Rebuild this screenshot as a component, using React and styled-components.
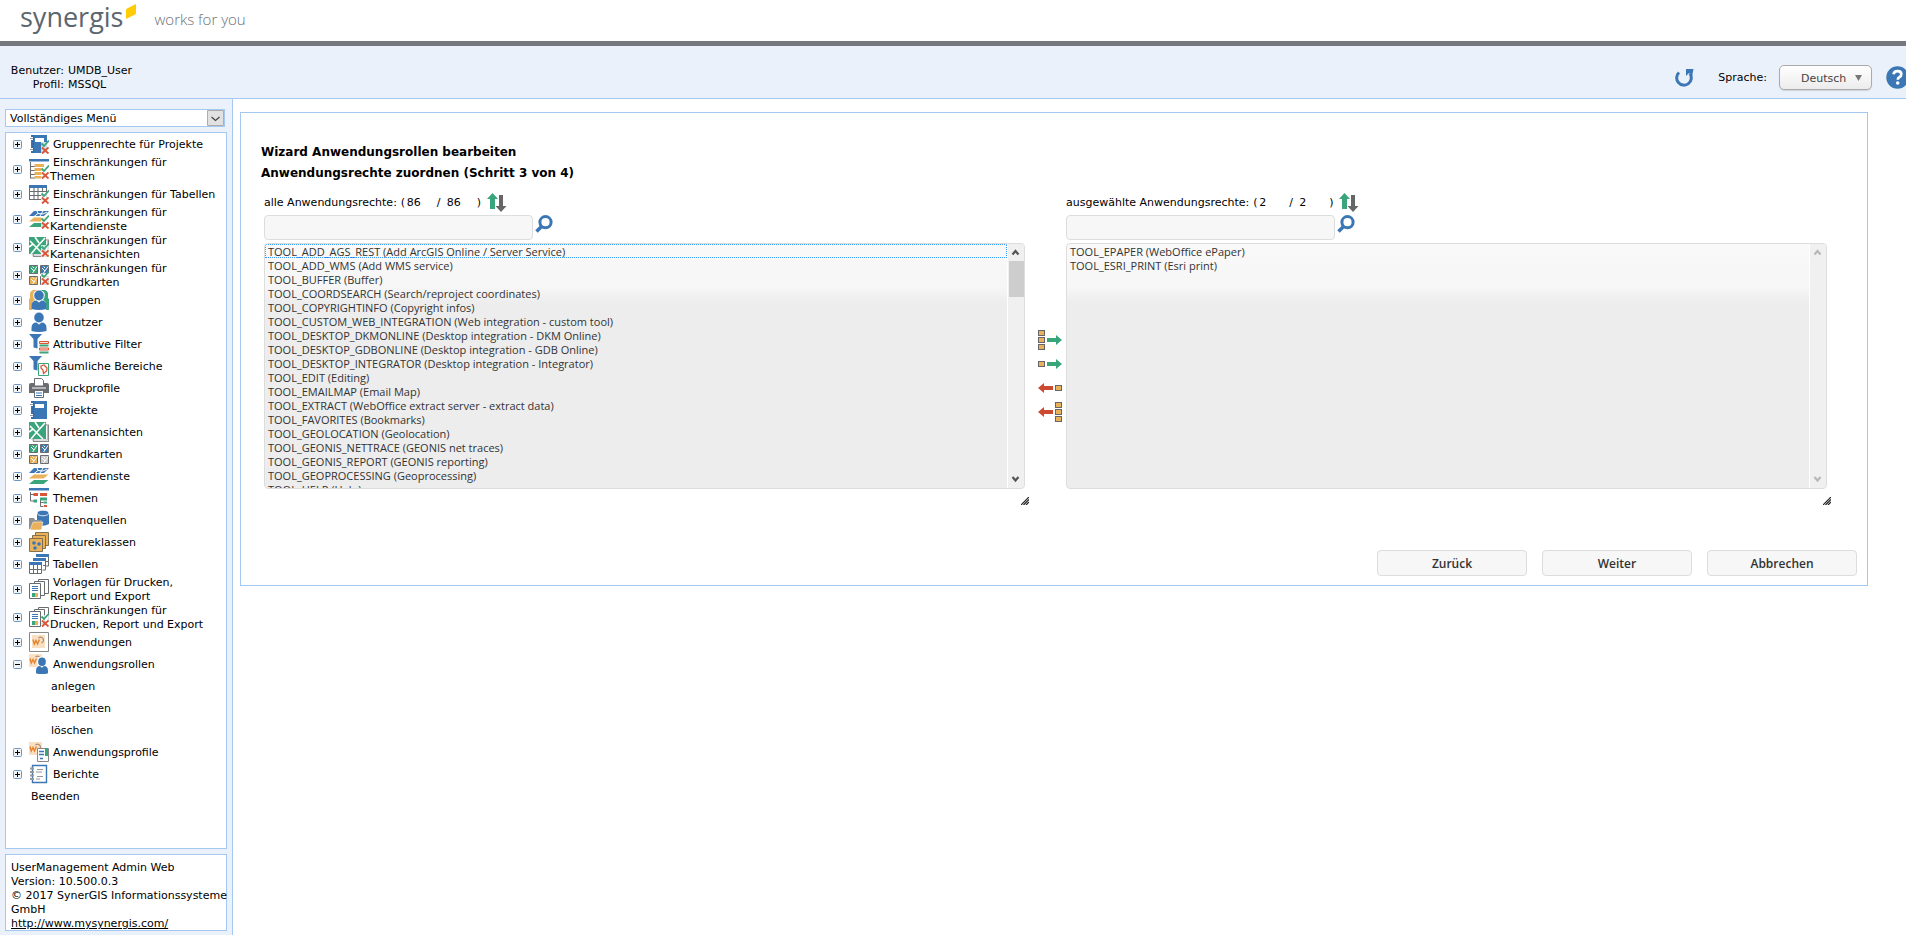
import { useState } from 'react'
import styled, { createGlobalStyle, css } from 'styled-components'

const BLUE = '#3c77b5'
const GREEN = '#3aa57a'
const ORANGE = '#e9b25a'
const RED = '#dc5538'
const GREY = '#6a6d6f'
const LINE = '#a4c8f0'
const PALE = '#eaf1fa'

const GlobalStyle = createGlobalStyle`
  * {
    box-sizing: border-box;
  }

  body {
    margin: 0;
    overflow-x: hidden;
    background: white;
    color: black;
    font-family: Verdana, 'DejaVu Sans', sans-serif;
    font-size: 11px;
    line-height: 14px;
  }
`

const Page = styled.div`
  display: flex;
  flex-direction: column;
  min-height: 100vh;
`

const Header = styled.header`
  display: flex;
  align-items: flex-start;
  height: 46px;
  padding-left: 20px;
  border-bottom: 5px solid #75787c;
  font-family: 'Open Sans', sans-serif;
`

const Brand = styled.div`
  font-size: 27px;
  line-height: 34px;
  color: #5c666e;
`

const BrandMark = styled.svg`
  width: 12px;
  height: 16px;
  margin: 4px 18px 0 1px;
`

const Claim = styled.div`
  font-size: 15px;
  font-weight: 300;
  line-height: 38px;
  color: #6c7074;
`

const TopBar = styled.div`
  display: flex;
  justify-content: space-between;
  height: 53px;
  background: ${PALE};
  border-bottom: 1px solid ${LINE};
`

const Session = styled.dl`
  display: grid;
  grid-template-columns: 54px auto;
  column-gap: 4px;
  align-content: start;
  margin: 0;
  padding: 18px 0 0 10px;

  dt {
    text-align: right;
  }

  dd {
    margin: 0;
  }
`

const Tools = styled.div`
  display: flex;
  align-items: center;
  height: 63px;
  margin-right: -3px;
`

const IconButton = styled.button`
  display: block;
  padding: 0;
  border: 0;
  background: none;
  line-height: 0;
  cursor: pointer;
`

const LanguageLabel = styled.label`
  margin: 0 12px 0 24px;
`

const SelectBox = styled.div`
  position: relative;

  svg {
    position: absolute;
    pointer-events: none;
  }
`

const LanguageBox = styled(SelectBox)`
  width: 93px;
  margin-right: 14px;

  svg {
    top: 10px;
    right: 10px;
  }
`

const LanguageSelect = styled.select`
  appearance: none;
  display: block;
  width: 100%;
  height: 25px;
  padding: 2px 0 0 21px;
  border: 1px solid #aaa;
  border-radius: 5px;
  background: linear-gradient(#fff, #ececec);
  box-shadow: 0 1px 1px rgba(0, 0, 0, 0.12);
  color: #444;
  font: inherit;
`

const Body = styled.div`
  display: flex;
  flex: 1;
`

const Sidebar = styled.aside`
  display: flex;
  flex-direction: column;
  flex: none;
  width: 233px;
  padding: 10px 5px 4px;
  background: ${PALE};
  border-right: 1px solid ${LINE};
`

const MenuBox = styled(SelectBox)`
  width: 220px;
  margin-bottom: 5px;

  svg {
    top: 1px;
    right: 1px;
  }
`

const MenuSelect = styled.select`
  appearance: none;
  display: block;
  width: 100%;
  height: 18px;
  padding: 2px 4px 0;
  border: 1px solid ${LINE};
  border-radius: 0;
  background: white;
  color: black;
  font: inherit;
`

const boxed = css`
  width: 222px;
  background: white;
  border: 1px solid ${LINE};
`

const Menu = styled.nav`
  ${boxed}
  flex: 1;
  margin-bottom: 5px;
`

const MenuList = styled.ul`
  margin: 0;
  padding: 0;
  list-style: none;
`

const MenuRow = styled.li`
  display: flex;
  align-items: center;
  height: ${({ $tall }) => ($tall ? '28px' : '22px')};
  padding-left: ${({ $indent = 7 }) => $indent}px;
`

const MenuLink = styled.a`
  display: flex;
  align-items: center;
  color: black;
  text-decoration: none;
`

const MenuText = styled.span`
  padding: 2px 0 0 1px;
  text-indent: 3px;
  white-space: pre;
`

const Toggle = styled(IconButton)`
  margin-right: 7px;
`

const Info = styled.footer`
  ${boxed}
  padding: 6px 5px 0;
  height: 77px;
  white-space: pre;

  a {
    color: black;
  }
`

const Main = styled.main`
  flex: 1;
  min-width: 0;
  padding: 13px 38px 13px 7px;
`

const Wizard = styled.form`
  padding: 29px 10px 9px 20px;
  border: 1px solid ${LINE};
`

const Title = styled.h1`
  margin: 0;
  font-size: 12px;
  line-height: 21px;
`

const Transfer = styled.div`
  display: flex;
  padding: 9px 30px 0 3px;
`

const Column = styled.section`
  flex: 1;
  min-width: 0;
`

const ColumnHead = styled.div`
  display: flex;
  align-items: center;
  height: 20px;
`

const Count = styled.span`
  width: 30px;
`

const Paren = styled.span`
  width: 10px;
  padding-left: ${({ $first }) => ($first ? '4px' : '0')};
`

const SearchRow = styled.div`
  display: flex;
  align-items: flex-start;
  gap: 2px;
  margin: 2px 0 3px;
`

const SearchInput = styled.input`
  width: 269px;
  height: 25px;
  border: 1px solid #ddd;
  border-radius: 4px;
  background: #f7f7f7;
  font: inherit;
`

const ListFrame = styled.div`
  display: flex;
  height: 246px;
  border: 1px solid #ddd;
  border-radius: 4px;
  overflow: hidden;
  background: linear-gradient(#f9f9f9, #f6f6f6 18%, #ededed 24%);
`

const ListSelect = styled.select`
  flex: 1;
  min-width: 0;
  height: 100%;
  padding: 0;
  border: 0;
  outline: 0;
  background: none;
  color: #333;
  font-family: 'Open Sans', sans-serif;
  font-size: 11px;
  scrollbar-width: none;

  option {
    height: 14px;
    min-height: 14px;
    padding: 0 3px;
  }

  option[data-current='true'] {
    outline: 1px dotted #3399ff;
    outline-offset: -1px;
  }
`

const ScrollTrack = styled.div`
  display: flex;
  flex-direction: column;
  align-items: center;
  justify-content: space-between;
  width: 17px;
  border-left: 1px solid white;
  background: #f0f0f0;
`

const ScrollThumb = styled.div`
  width: 15px;
  height: 36px;
  margin-bottom: auto;
  background: #cdcdcd;
`

const Grip = styled.div`
  display: flex;
  justify-content: flex-end;
  margin: 8px -4px 0 0;
`

const MoveButtons = styled.div`
  display: flex;
  flex-direction: column;
  align-items: flex-end;
  width: 41px;
  padding: 135px 4px 0 0;

  button {
    height: 24px;
  }
`

const Actions = styled.div`
  display: flex;
  justify-content: flex-end;
  gap: 15px;
  margin-top: 45px;
`

const ActionButton = styled.button`
  width: 150px;
  height: 26px;
  border: 1px solid #ddd;
  border-radius: 4px;
  background: #f7f7f7;
  color: #333;
  font-family: 'Open Sans', sans-serif;
  font-size: 12px;
  font-weight: 600;
`

/* ---------- icons ---------- */

const Icon = ({ children }) => (
  <svg width="20" height="20" viewBox="0 0 20 20" fill="none" aria-hidden="true">
    {children}
  </svg>
)

const CheckCross = () => (
  <g fill="none">
    <path d="M12 8h8v12h-8z" fill="#fff" fillOpacity=".75" />
    <path d="M12.500 9.500l2.500 2.500 5-5.500" stroke={GREEN} strokeWidth="1.800" />
    <path d="M13 13.500l6.500 6M19.500 13.500l-6.500 6" stroke={RED} strokeWidth="1.900" />
  </g>
)

const Book = () => (
  <g>
    <path d="M2 1h16v18H2z" fill={BLUE} />
    <path d="M6 4h9v4H6z" fill="#fff" />
    <path d="M4 1v18" stroke="#2f639b" strokeWidth="1" />
    <path d="M1 4.500h3M1 15.500h3" stroke="#fff" strokeWidth="3" />
    <path d="M1 4.500h3M1 15.500h3" stroke="#999" strokeWidth="1.200" />
  </g>
)

const Grid = () => (
  <g>
    <path d="M0 1h18v3H0z" fill={BLUE} />
    <path d="M.5 4v11.500h17V4M0 7.500h18M0 11.500h18M5 4v11M9 4v11M13.500 4v11" stroke={GREY} strokeWidth="1.100" />
  </g>
)

const Layers = () => (
  <g>
    <path d="M5 10.500h14.500l-5 4H0z" transform="translate(0 3.500)" fill={GREEN} />
    <path d="M5 9.500h14.500l-5 4H0z" fill="#fff" />
    <path d="M5 8.500h14.500l-5 4H0z" fill={ORANGE} />
    <path d="M5 1.500h15l-5 6H0z" fill="#fff" />
    <path d="M5 2h15l-5 5H0z" fill={BLUE} />
    <path d="M8 2l1 2.500-4 3M14 2l-3 5M9 4.500l5 .5 4-2" stroke="#fff" strokeWidth="1" />
  </g>
)

const MapView = () => (
  <g>
    <path d="M17 3h2.500v16.500H4.500V17" stroke="#8a8a8a" strokeWidth="1.200" />
    <path d="M17 3h1.500v15H3V17" stroke="#bbb" strokeWidth="1" />
    <path d="M0 0h17v17H0z" fill={GREEN} />
    <path d="M1 4l13 13M16 1L7 11l-5 6M0 10l4-3M6 0l4 6" stroke="#fff" strokeWidth="1.600" />
  </g>
)

const Tile = ({ x, y, color }) => (
  <g transform={`translate(${x} ${y})`}>
    <path d="M.5.5h8v8h-8z" fill={color} stroke={GREY} />
    <path d="M2 3l3 3 3-4.500M5 6L3.500 8M3.500 1.500L5 3" stroke="#fff" strokeWidth="1" />
  </g>
)

const Tiles = () => (
  <g>
    <Tile x={0} y={0} color={GREEN} />
    <Tile x={11} y={0} color={BLUE} />
    <Tile x={0} y={11} color={ORANGE} />
    <Tile x={11} y={11} color="#ccc" />
  </g>
)

const Person = ({ color = BLUE }) => (
  <g fill={color}>
    <ellipse cx="10" cy="5.500" rx="4.800" ry="5" />
    <path d="M2.500 19v-3q0-5.500 5-5.500l2.500 2 2.500-2q5 0 5 5.500v3q-7.500 2-15 0z" />
  </g>
)

const Funnel = () => (
  <path d="M0 0h13L8.500 5v9.500l-4-1V5z" fill={BLUE} />
)

const Pages = () => (
  <g stroke={GREY} fill="#fff">
    <path d="M9.500.5h10v14h-10z" />
    <path d="M5.500 2.500h10v14h-10z" />
    <path d="M.5 4.500h11v15H.5z" />
    <path d="M3 7.500h6M3 9.500h6M3 11.500h6" stroke={BLUE} />
    <path d="M3 14h3v4H3z" fill={GREEN} stroke="none" />
    <path d="M6 14h3v4H6z" fill={ORANGE} stroke="none" />
  </g>
)

const Wo = () => (
  <g>
    <path d="M0 0h13v13H0z" fill="#fae0c3" />
    <path d="M6.500 3Q9 1 11 3.500q1.500 3-1.500 4.500" stroke="#a98f75" strokeWidth="1.200" />
    <path d="M1 4.500l1.300 4.500L4 5.500 5.500 9 7.500 4.500" stroke="#e8852c" strokeWidth="1.500" />
  </g>
)

const ICONS = {
  projectRights: <><Book /><CheckCross /></>,
  themeLimits: (
    <>
      <path d="M0 0h20v2.500H0z" fill={BLUE} />
      <path d="M1.500 3v16.500M1 7.500h5M1 11.500h5M1 15.500h5M1 19h5" stroke={GREY} strokeWidth="1.100" />
      <path d="M5.500 5H15v3H5.500zM5.500 9H13v3H5.500zM5.500 13h8v3h-8zM5.500 17h8v2.500h-8z" fill={ORANGE} />
      <CheckCross />
    </>
  ),
  tableLimits: <><Grid /><CheckCross /></>,
  serviceLimits: <><Layers /><CheckCross /></>,
  viewLimits: <><MapView /><CheckCross /></>,
  basemapLimits: <><Tiles /><CheckCross /></>,
  groups: (
    <>
      <path d="M0 20V9l1-1V3q2-4 6-3h3v20z" fill={ORANGE} />
      <path d="M20 20V9l-1-1V3q-2-4-6-3h-3v20z" fill={GREEN} />
      <path d="M3 20q-1-9 3-10-3-4-1-8 5-4 10 0 2 4-1 8 4 1 3 10z" fill="#fff" />
      <Person />
    </>
  ),
  user: <Person />,
  filter: (
    <>
      <Funnel />
      <path d="M10.500 7.500h9v2h-9zM10.500 14h9v2h-9z" stroke={RED} fill="#fbe3dd" />
      <path d="M10.500 11.500h9M10.500 18.500h9" stroke={GREEN} strokeWidth="1.800" />
    </>
  ),
  areas: (
    <>
      <Funnel />
      <path d="M9.500 7.500h10v12h-10z" fill="#fff" stroke={GREEN} />
      <path d="M12 10l3-1 3 3-.5 3-3 2.500-.5-3.500-2-2z" stroke={RED} strokeWidth="1.300" />
    </>
  ),
  print: (
    <>
      <path d="M0 7q0-2 2-2h16q2 0 2 2v8H0z" fill={GREY} />
      <path d="M5.500.5h7l2 2V8h-9z" fill="#fff" stroke={GREY} />
      <path d="M3 10h14" stroke="#fff" />
      <path d="M5.500 12.500h9v7h-9z" fill="#fff" stroke={GREY} />
      <path d="M7 15h6M7 17.500h6" stroke={BLUE} strokeWidth="1.200" />
    </>
  ),
  projects: <Book />,
  views: <MapView />,
  basemaps: <Tiles />,
  services: <Layers />,
  themes: (
    <>
      <path d="M0 0h20v2.500H0z" fill={BLUE} />
      <path d="M1.500 4v9H5M1.500 6.500H5M11.500 10v8.500h3M11.500 14.500h3" stroke={GREY} />
      <path d="M4.500 5H9v3H4.500zM11 5h7v3h-7zM15 17h3v2h-3z" fill={RED} />
      <path d="M4.500 11.500H8v3H4.500zM11 9.500h7v3h-7zM14.500 13.500h3.500v2h-3.500z" fill={GREEN} />
    </>
  ),
  sources: (
    <>
      <path d="M8 3v11q6 3.500 12 0V3z" fill={BLUE} />
      <ellipse cx="14" cy="3" rx="6" ry="2.800" fill={BLUE} stroke="#fff" strokeWidth=".8" />
      <path d="M0 19V8h5l1 2h7v9z" fill="#8d8f90" />
      <path d="M1 20l3-8h10l-2 8z" fill={ORANGE} stroke="#fff" strokeWidth=".5" />
    </>
  ),
  features: (
    <g stroke="#85704c" fill={ORANGE}>
      <path d="M6.500.5h13v13h-13z" />
      <path d="M3.500 3.500h13v13h-13z" />
      <path d="M.5 6.500h13v13H.5z" />
      <g fill={BLUE} stroke="none">
        <circle cx="5" cy="11" r="1.800" />
        <circle cx="10" cy="12" r="1.800" />
        <circle cx="6" cy="16" r="1.800" />
      </g>
    </g>
  ),
  tables: (
    <>
      <path d="M7 0h13v3H7zM4 4h13v3H4zM0 8h13v3H0z" fill={BLUE} />
      <path d="M19.500 3v9h-3M16.500 7v9h-3M.5 11v8.500h12V11M0 15.500h13M4.500 11v8M8.500 11v8M17 7.500h2.500M14 11.500h2.500" stroke={GREY} />
    </>
  ),
  templates: <Pages />,
  templateLimits: <><Pages /><CheckCross /></>,
  apps: (
    <>
      <path d="M.5.500h19v19H.5z" fill="#fff" stroke="#888" />
      <g transform="translate(3 3)"><Wo /></g>
    </>
  ),
  roles: (
    <>
      <Wo />
      <g transform="translate(5 3) scale(.8 .86)">
        <path d="M2 20q-1-9 3-10-2-4 0-9 5-3 10 0 2 5 0 9 4 1 4 10z" fill="#fff" />
        <Person />
      </g>
    </>
  ),
  profiles: (
    <>
      <Wo />
      <path d="M8.500 6.500h11v13h-11z" fill="#fff" stroke="#888" />
      <path d="M10 9.500h5M10 12.500h5M11 16.500h3" stroke={BLUE} strokeWidth="1.300" />
      <path d="M16 6h3v8h-3z" fill={GREEN} />
    </>
  ),
  reports: (
    <>
      <path d="M3.500 1.500h14v17h-14z" fill="#fff" stroke={BLUE} strokeWidth="1.400" />
      <path d="M8 5.500h6M7 8h6M8 12.500h6M7 15h4" stroke="#999" />
      <path d="M1 4.500h4M1 8h4M1 11.500h4M1 15h4" stroke="#999" strokeWidth="1.800" />
    </>
  ),
}

const ToggleIcon = ({ open }) => (
  <svg width="9" height="9" viewBox="0 0 9 9" aria-hidden="true">
    <rect x=".5" y=".5" width="8" height="8" rx="1" fill="#f1f4f7" stroke="#6f96bf" />
    <path d={open ? 'M2 4.500h5' : 'M2 4.500h5M4.500 2v5'} stroke="#000" />
  </svg>
)

const SortIcon = () => (
  <svg width="20" height="20" viewBox="0 0 20 20" aria-hidden="true">
    <path d="M5.500 0L11 6H8v10H3V6H0z" fill={GREEN} />
    <path d="M12 2h4v11h3.500L14 19l-5.500-6H12z" fill="#666" />
  </svg>
)

const SearchIcon = () => (
  <svg width="18" height="18" viewBox="0 0 18 18" fill="none" stroke={BLUE} aria-hidden="true">
    <circle cx="10.500" cy="7.200" r="5.600" strokeWidth="3" />
    <path d="M6.500 11.500l-5 5" strokeWidth="3.600" />
  </svg>
)

const RefreshIcon = () => (
  <svg width="19" height="18" viewBox="0 0 19 18" aria-hidden="true">
    <path d="M4 3.500a7.300 7.300 0 1 0 11 1.200" fill="none" stroke={BLUE} strokeWidth="3" />
    <path d="M11 0h7.500L17 7.500z" fill={BLUE} />
    <path d="M11 0h7L11 7z" fill={BLUE} />
  </svg>
)

const HelpIcon = () => (
  <svg width="23" height="23" viewBox="0 0 23 23" aria-hidden="true">
    <circle cx="11.500" cy="11.500" r="11.200" fill={BLUE} />
    <path d="M7.500 8.300q.5-3.200 4-3.200 3.800 0 3.800 3.100 0 1.800-1.900 2.900-1.600.9-1.600 2.700" fill="none" stroke="#fff" strokeWidth="2.700" />
    <circle cx="11.700" cy="17" r="1.800" fill="#fff" />
  </svg>
)

const ScrollArrow = ({ down, faded }) => (
  <svg width="16" height="17" viewBox="0 0 16 17" fill="none" aria-hidden="true">
    <path
      d={down ? 'M4.500 6l3 3.500 3-3.500' : 'M4.500 10.500l3-3.500 3 3.500'}
      stroke={faded ? '#b8b8b8' : '#555'}
      strokeWidth="2.200"
    />
  </svg>
)

const GripIcon = () => (
  <svg width="8" height="8" viewBox="0 0 8 8" stroke="#222" strokeWidth="1.200" aria-hidden="true">
    <path d="M0 8l8-8M2.500 8L8 2.500M5 8l3-3" />
  </svg>
)

const MoveIcon = ({ back, all }) => {
  const boxX = back ? 17.5 : 0.5
  const rows = all ? [0.5, 7.5, 14.5] : [7.5]
  return (
    <svg width="24" height="20" viewBox="0 0 24 20" aria-hidden="true">
      {rows.map((y) => (
        <rect key={y} x={boxX} y={y} width="6" height="5" fill={ORANGE} stroke="#666" />
      ))}
      <path
        d={back ? 'M0 10l6-5v3h9v4H6v3z' : 'M24 10l-6-5v3H9v4h9v3z'}
        fill={back ? '#cb4b31' : GREEN}
      />
    </svg>
  )
}

/* ---------- data ---------- */

const MENU = [
  { icon: 'projectRights', label: 'Gruppenrechte für Projekte' },
  { icon: 'themeLimits', label: 'Einschränkungen für\nThemen' },
  { icon: 'tableLimits', label: 'Einschränkungen für Tabellen' },
  { icon: 'serviceLimits', label: 'Einschränkungen für\nKartendienste' },
  { icon: 'viewLimits', label: 'Einschränkungen für\nKartenansichten' },
  { icon: 'basemapLimits', label: 'Einschränkungen für\nGrundkarten' },
  { icon: 'groups', label: 'Gruppen' },
  { icon: 'user', label: 'Benutzer' },
  { icon: 'filter', label: 'Attributive Filter' },
  { icon: 'areas', label: 'Räumliche Bereiche' },
  { icon: 'print', label: 'Druckprofile' },
  { icon: 'projects', label: 'Projekte' },
  { icon: 'views', label: 'Kartenansichten' },
  { icon: 'basemaps', label: 'Grundkarten' },
  { icon: 'services', label: 'Kartendienste' },
  { icon: 'themes', label: 'Themen' },
  { icon: 'sources', label: 'Datenquellen' },
  { icon: 'features', label: 'Featureklassen' },
  { icon: 'tables', label: 'Tabellen' },
  { icon: 'templates', label: 'Vorlagen für Drucken,\nReport und Export' },
  { icon: 'templateLimits', label: 'Einschränkungen für\nDrucken, Report und Export' },
  { icon: 'apps', label: 'Anwendungen' },
  { icon: 'roles', label: 'Anwendungsrollen', items: ['anlegen', 'bearbeiten', 'löschen'] },
  { icon: 'profiles', label: 'Anwendungsprofile' },
  { icon: 'reports', label: 'Berichte' },
]

const ALL_RIGHTS = [
  'TOOL_ADD_AGS_REST (Add ArcGIS Online / Server Service)',
  'TOOL_ADD_WMS (Add WMS service)',
  'TOOL_BUFFER (Buffer)',
  'TOOL_COORDSEARCH (Search/reproject coordinates)',
  'TOOL_COPYRIGHTINFO (Copyright infos)',
  'TOOL_CUSTOM_WEB_INTEGRATION (Web integration - custom tool)',
  'TOOL_DESKTOP_DKMONLINE (Desktop integration - DKM Online)',
  'TOOL_DESKTOP_GDBONLINE (Desktop integration - GDB Online)',
  'TOOL_DESKTOP_INTEGRATOR (Desktop integration - Integrator)',
  'TOOL_EDIT (Editing)',
  'TOOL_EMAILMAP (Email Map)',
  'TOOL_EXTRACT (WebOffice extract server - extract data)',
  'TOOL_FAVORITES (Bookmarks)',
  'TOOL_GEOLOCATION (Geolocation)',
  'TOOL_GEONIS_NETTRACE (GEONIS net traces)',
  'TOOL_GEONIS_REPORT (GEONIS reporting)',
  'TOOL_GEOPROCESSING (Geoprocessing)',
  'TOOL_HELP (Help)',
]

const SELECTED_RIGHTS = [
  'TOOL_EPAPER (WebOffice ePaper)',
  'TOOL_ESRI_PRINT (Esri print)',
]

const MenuEntry = ({ icon, label, items }) => {
  const [open, setOpen] = useState(Boolean(items))

  return (
    <>
      <MenuRow $tall={label.includes('\n')}>
        <Toggle type="button" aria-label={label} aria-expanded={open} onClick={() => setOpen(!open)}>
          <ToggleIcon open={open} />
        </Toggle>
        <MenuLink href="#">
          <Icon>{ICONS[icon]}</Icon>
          <MenuText>{label}</MenuText>
        </MenuLink>
      </MenuRow>
      {open && items?.map((item) => (
        <MenuRow key={item} $indent={41}>
          <MenuLink href="#"><MenuText>{item}</MenuText></MenuLink>
        </MenuRow>
      ))}
    </>
  )
}

const RightsColumn = ({ id, label, count, options, scrollable }) => (
  <Column>
    <ColumnHead>
      <label htmlFor={id}>{label}</label>
      <Paren $first>(</Paren>
      <Count>{count}</Count>
      <Paren>/</Paren>
      <Count>{count}</Count>
      <Paren>)</Paren>
      <IconButton type="button" aria-label="Sortieren"><SortIcon /></IconButton>
    </ColumnHead>
    <SearchRow>
      <SearchInput type="text" aria-label={`${label} suchen`} />
      <IconButton type="button" aria-label="Suchen"><SearchIcon /></IconButton>
    </SearchRow>
    <ListFrame>
      <ListSelect id={id} multiple size={17}>
        {options.map((option, index) => (
          <option key={option} data-current={scrollable && index === 0}>{option}</option>
        ))}
      </ListSelect>
      <ScrollTrack>
        <ScrollArrow faded={!scrollable} />
        {scrollable && <ScrollThumb />}
        <ScrollArrow down faded={!scrollable} />
      </ScrollTrack>
    </ListFrame>
    <Grip><GripIcon /></Grip>
  </Column>
)

const App = () => (
  <Page>
    <GlobalStyle />
    <Header>
      <Brand>synergis</Brand>
      <BrandMark viewBox="0 0 12 16" aria-hidden="true">
        <path d="M1 6q0-1 1-1.500L11 0v9q0 1-1 1.500L1 15z" fill="#ffcb05" />
      </BrandMark>
      <Claim>works for you</Claim>
    </Header>

    <TopBar>
      <Session>
        <dt>Benutzer:</dt>
        <dd>UMDB_User</dd>
        <dt>Profil:</dt>
        <dd>MSSQL</dd>
      </Session>
      <Tools>
        <IconButton type="button" aria-label="Aktualisieren"><RefreshIcon /></IconButton>
        <LanguageLabel htmlFor="language">Sprache:</LanguageLabel>
        <LanguageBox>
          <LanguageSelect id="language">
            <option>Deutsch</option>
          </LanguageSelect>
          <svg width="7" height="6" viewBox="0 0 7 6" aria-hidden="true">
            <path d="M0 0h7L3.500 6z" fill="#777" />
          </svg>
        </LanguageBox>
        <IconButton type="button" aria-label="Hilfe"><HelpIcon /></IconButton>
      </Tools>
    </TopBar>

    <Body>
      <Sidebar>
        <MenuBox>
          <MenuSelect aria-label="Menü">
            <option>Vollständiges Menü</option>
          </MenuSelect>
          <svg width="17" height="16" viewBox="0 0 17 16" fill="none" aria-hidden="true">
            <path d="M.5.5h16v15H.5z" fill="#e1e1e1" stroke="#adadad" />
            <path d="M4.500 7l4 3.500 4-3.500" stroke="#444" strokeWidth="1.200" />
          </svg>
        </MenuBox>
        <Menu>
          <MenuList>
            {MENU.map((entry) => <MenuEntry key={entry.label} {...entry} />)}
            <MenuRow $indent={21}>
              <MenuLink href="#"><MenuText>Beenden</MenuText></MenuLink>
            </MenuRow>
          </MenuList>
        </Menu>
        <Info>
          {'UserManagement Admin Web\nVersion: 10.500.0.3\n© 2017 SynerGIS Informationssysteme\nGmbH\n'}
          <a href="http://www.mysynergis.com/">http://www.mysynergis.com/</a>
        </Info>
      </Sidebar>

      <Main>
        <Wizard onSubmit={(event) => event.preventDefault()}>
          <Title>Wizard Anwendungsrollen bearbeiten</Title>
          <Title as="h2">Anwendungsrechte zuordnen (Schritt 3 von 4)</Title>
          <Transfer>
            <RightsColumn
              id="all-rights"
              label="alle Anwendungsrechte:"
              count={86}
              options={ALL_RIGHTS}
              scrollable
            />
            <MoveButtons>
              <IconButton type="button" aria-label="Alle hinzufügen"><MoveIcon all /></IconButton>
              <IconButton type="button" aria-label="Hinzufügen"><MoveIcon /></IconButton>
              <IconButton type="button" aria-label="Entfernen"><MoveIcon back /></IconButton>
              <IconButton type="button" aria-label="Alle entfernen"><MoveIcon back all /></IconButton>
            </MoveButtons>
            <RightsColumn
              id="selected-rights"
              label="ausgewählte Anwendungsrechte:"
              count={2}
              options={SELECTED_RIGHTS}
            />
          </Transfer>
          <Actions>
            <ActionButton type="button">Zurück</ActionButton>
            <ActionButton type="submit">Weiter</ActionButton>
            <ActionButton type="button">Abbrechen</ActionButton>
          </Actions>
        </Wizard>
      </Main>
    </Body>
  </Page>
)

export default App
